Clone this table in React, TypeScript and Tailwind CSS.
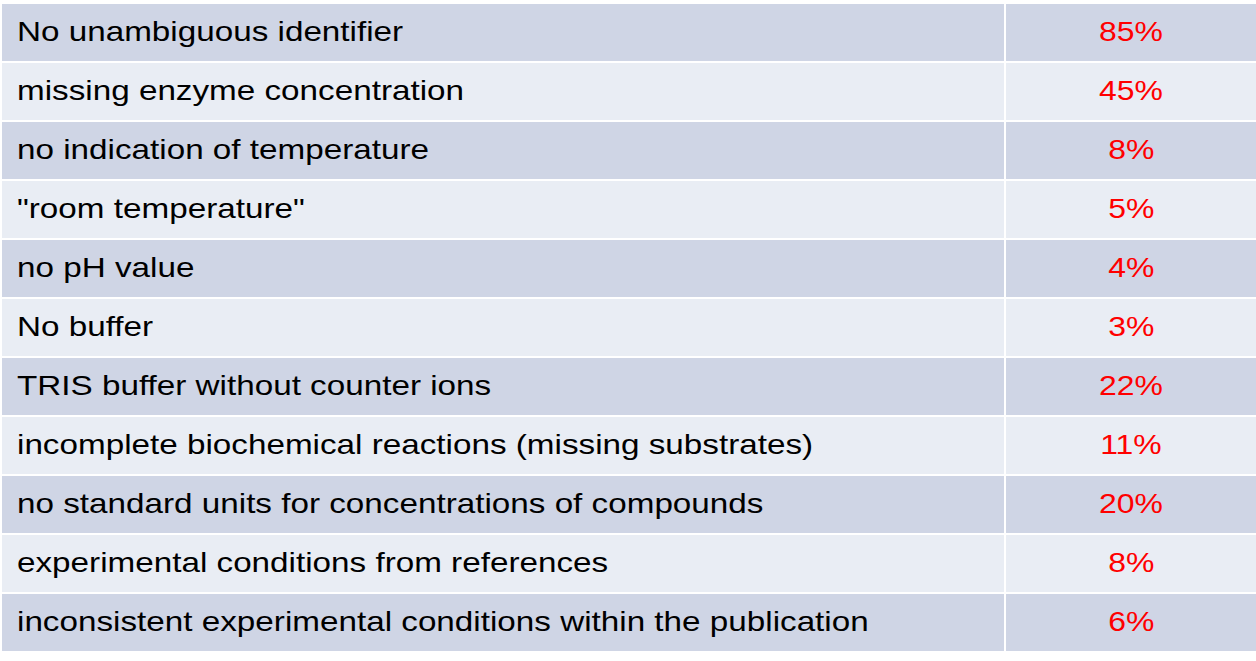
const rows: [string, string][] = [
  ["No unambiguous identifier", "85%"],
  ["missing enzyme concentration", "45%"],
  ["no indication of temperature", "8%"],
  ['"room temperature"', "5%"],
  ["no pH value", "4%"],
  ["No buffer", "3%"],
  ["TRIS buffer without counter ions", "22%"],
  ["incomplete biochemical reactions (missing substrates)", "11%"],
  ["no standard units for concentrations of compounds", "20%"],
  ["experimental conditions from references", "8%"],
  ["inconsistent experimental conditions within the publication", "6%"],
]

export default function App() {
  return (
    <div className="h-[661px] w-[1256px] overflow-hidden bg-white pl-[2px] pt-[4px] font-['Liberation_Sans',Arial,sans-serif]">
      <div className="grid grid-cols-[1002px_250px] gap-[2px]">
        {rows.map(([label, value], i) => {
          const bg = i % 2 === 0 ? "bg-[#cfd5e5]" : "bg-[#e9edf4]"
          return (
            <div key={i} className="contents">
              <div className={`flex h-[57px] items-center pb-[2px] pl-[15px] text-[28px] text-black ${bg}`}>
                <span className="origin-left scale-x-[1.187] whitespace-nowrap">{label}</span>
              </div>
              <div className={`flex h-[57px] items-center justify-center pb-[2px] text-[28px] text-[#ff0000] ${bg}`}>
                <span className="scale-x-[1.14] whitespace-nowrap">{value}</span>
              </div>
            </div>
          )
        })}
      </div>
    </div>
  )
}
